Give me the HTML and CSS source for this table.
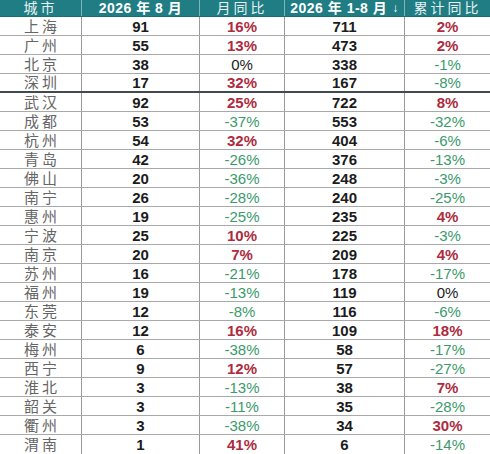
FILE: index.html
```html
<!DOCTYPE html>
<html lang="zh">
<head>
<meta charset="utf-8">
<link rel="stylesheet" href="styles.css">
</head>
<body>
<div class="table">
  <div class="row head">
    <div class="c c1 light">城市</div>
    <div class="c c2">2026 年 8 月</div>
    <div class="c c3 light">月同比</div>
    <div class="c c4">2026 年 1-8 月<span class="arrow">↓</span></div>
    <div class="c c5 light">累计同比</div>
  </div>
  <div class="row"><div class="c c1 city">上海</div><div class="c c2 num">91</div><div class="c c3 up">16%</div><div class="c c4 num">711</div><div class="c c5 up">2%</div></div>
  <div class="row"><div class="c c1 city">广州</div><div class="c c2 num">55</div><div class="c c3 up">13%</div><div class="c c4 num">473</div><div class="c c5 up">2%</div></div>
  <div class="row"><div class="c c1 city">北京</div><div class="c c2 num">38</div><div class="c c3 zero">0%</div><div class="c c4 num">338</div><div class="c c5 down">-1%</div></div>
  <div class="row sep"><div class="c c1 city">深圳</div><div class="c c2 num">17</div><div class="c c3 up">32%</div><div class="c c4 num">167</div><div class="c c5 down">-8%</div></div>
  <div class="row"><div class="c c1 city">武汉</div><div class="c c2 num">92</div><div class="c c3 up">25%</div><div class="c c4 num">722</div><div class="c c5 up">8%</div></div>
  <div class="row"><div class="c c1 city">成都</div><div class="c c2 num">53</div><div class="c c3 down">-37%</div><div class="c c4 num">553</div><div class="c c5 down">-32%</div></div>
  <div class="row"><div class="c c1 city">杭州</div><div class="c c2 num">54</div><div class="c c3 up">32%</div><div class="c c4 num">404</div><div class="c c5 down">-6%</div></div>
  <div class="row"><div class="c c1 city">青岛</div><div class="c c2 num">42</div><div class="c c3 down">-26%</div><div class="c c4 num">376</div><div class="c c5 down">-13%</div></div>
  <div class="row"><div class="c c1 city">佛山</div><div class="c c2 num">20</div><div class="c c3 down">-36%</div><div class="c c4 num">248</div><div class="c c5 down">-3%</div></div>
  <div class="row"><div class="c c1 city">南宁</div><div class="c c2 num">26</div><div class="c c3 down">-28%</div><div class="c c4 num">240</div><div class="c c5 down">-25%</div></div>
  <div class="row"><div class="c c1 city">惠州</div><div class="c c2 num">19</div><div class="c c3 down">-25%</div><div class="c c4 num">235</div><div class="c c5 up">4%</div></div>
  <div class="row"><div class="c c1 city">宁波</div><div class="c c2 num">25</div><div class="c c3 up">10%</div><div class="c c4 num">225</div><div class="c c5 down">-3%</div></div>
  <div class="row"><div class="c c1 city">南京</div><div class="c c2 num">20</div><div class="c c3 up">7%</div><div class="c c4 num">209</div><div class="c c5 up">4%</div></div>
  <div class="row"><div class="c c1 city">苏州</div><div class="c c2 num">16</div><div class="c c3 down">-21%</div><div class="c c4 num">178</div><div class="c c5 down">-17%</div></div>
  <div class="row"><div class="c c1 city">福州</div><div class="c c2 num">19</div><div class="c c3 down">-13%</div><div class="c c4 num">119</div><div class="c c5 zero">0%</div></div>
  <div class="row"><div class="c c1 city">东莞</div><div class="c c2 num">12</div><div class="c c3 down">-8%</div><div class="c c4 num">116</div><div class="c c5 down">-6%</div></div>
  <div class="row"><div class="c c1 city">泰安</div><div class="c c2 num">12</div><div class="c c3 up">16%</div><div class="c c4 num">109</div><div class="c c5 up">18%</div></div>
  <div class="row"><div class="c c1 city">梅州</div><div class="c c2 num">6</div><div class="c c3 down">-38%</div><div class="c c4 num">58</div><div class="c c5 down">-17%</div></div>
  <div class="row"><div class="c c1 city">西宁</div><div class="c c2 num">9</div><div class="c c3 up">12%</div><div class="c c4 num">57</div><div class="c c5 down">-27%</div></div>
  <div class="row"><div class="c c1 city">淮北</div><div class="c c2 num">3</div><div class="c c3 down">-13%</div><div class="c c4 num">38</div><div class="c c5 up">7%</div></div>
  <div class="row"><div class="c c1 city">韶关</div><div class="c c2 num">3</div><div class="c c3 down">-11%</div><div class="c c4 num">35</div><div class="c c5 down">-28%</div></div>
  <div class="row"><div class="c c1 city">衢州</div><div class="c c2 num">3</div><div class="c c3 down">-38%</div><div class="c c4 num">34</div><div class="c c5 up">30%</div></div>
  <div class="row last"><div class="c c1 city">渭南</div><div class="c c2 num">1</div><div class="c c3 up">41%</div><div class="c c4 num">6</div><div class="c c5 down">-14%</div></div>
</div>
</body>
</html>
```
FILE: styles.css
```css
html, body {
  margin: 0;
  padding: 0;
  background: #ffffff;
}
.table {
  width: 490px;
  display: flex;
  flex-direction: column;
  font-family: "Liberation Sans", Arial, "Noto Sans CJK SC", sans-serif;
}
.row {
  display: grid;
  grid-template-columns: 82px 118px 85px 120px 85px;
  height: 19px;
  box-sizing: border-box;
  border-bottom: 1px solid #a9a9a9;
}
.row.head {
  height: 17px;
  background: #1f7d83;
  border-bottom: 1px solid #1a6e74;
  color: #ffffff;
}
.row.sep {
  border-bottom: 2px solid #3f4b4d;
}
.row.last {
  border-bottom: none;
}
.c {
  display: flex;
  align-items: center;
  justify-content: center;
  border-right: 1px solid #9a9a9a;
  box-sizing: border-box;
  font-size: 15px;
  line-height: 1;
  white-space: nowrap;
}
.c5 {
  border-right: none;
}
.head .c {
  border-right: 1px solid #7fb4b8;
  font-size: 14px;
  font-weight: bold;
  letter-spacing: 0.5px;
}
.head .c5 {
  border-right: none;
}
.head .light {
  font-weight: normal;
  letter-spacing: 3px;
  font-size: 14px;
  color: #e8f2f2;
}
.arrow {
  font-size: 12px;
  margin-left: 5px;
  font-weight: bold;
}
.city {
  color: #666666;
  letter-spacing: 3px;
  font-size: 15px;
  padding-left: 3px;
}
.num {
  font-weight: bold;
  color: #1c1c1c;
  font-size: 15px;
}
.up {
  color: #ad2c40;
  font-weight: bold;
}
.down {
  color: #3a9a6c;
}
.zero {
  color: #222222;
}
```
